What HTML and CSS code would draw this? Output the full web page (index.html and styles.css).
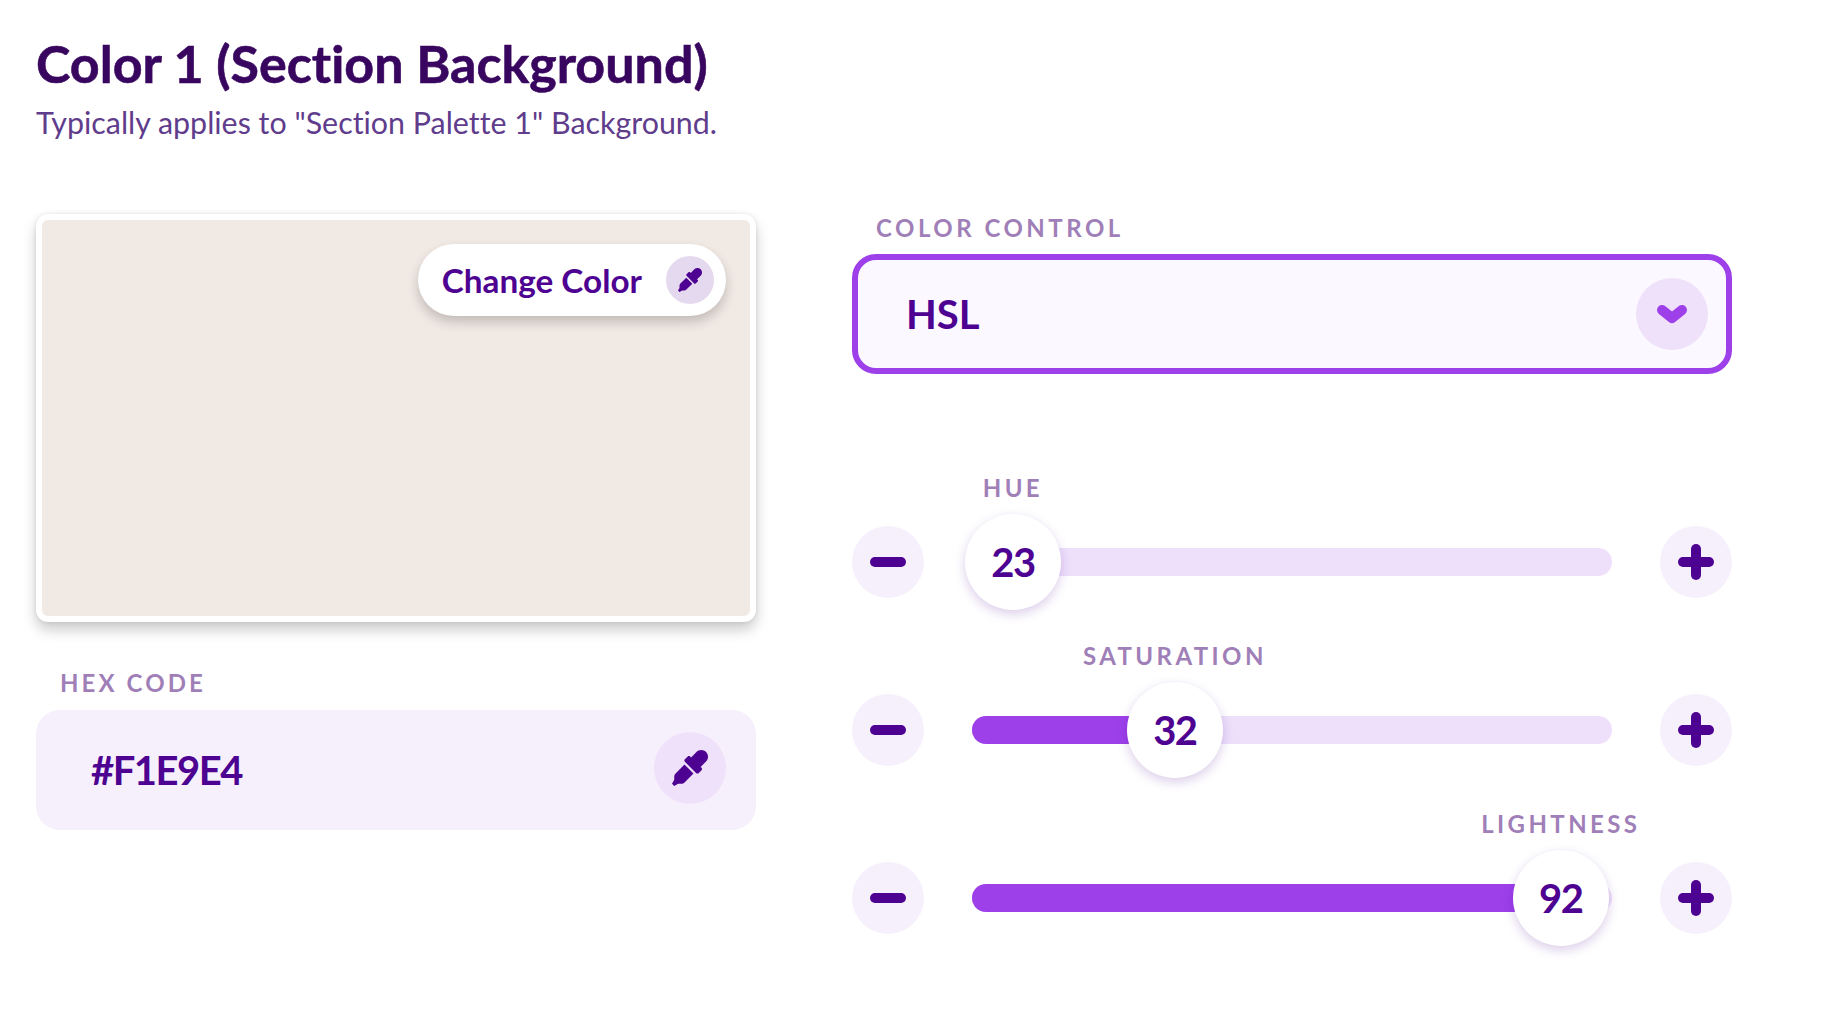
FILE: index.html
```html
<!DOCTYPE html>
<html lang="en">
<head>
  <meta charset="UTF-8">
  <title>Color 1 (Section Background)</title>
  <link rel="stylesheet" href="styles.css">
</head>
<body>

  <h1 class="title">Color 1 (Section Background)</h1>
  <p class="subtitle">Typically applies to "Section Palette 1" Background.</p>

  <div class="columns">

    <div class="leftCol">
      <div class="swatch">
        <div class="swatchFill">
          <div class="changeBtn">
            <span>Change Color</span>
            <span class="changeIcon">
              <svg width="24" height="24" viewBox="0 0 512 512"><path class="dropper" d="M50.75 333.25c-12 12-18.75 28.28-18.75 45.26V424L0 480l32 32 56-32h45.49c16.97 0 33.25-6.74 45.25-18.74l126.64-126.62-128-128L50.75 333.25zM483.88 28.12c-37.47-37.5-98.28-37.5-135.75 0l-77.09 77.09-13.1-13.1c-9.44-9.44-24.65-9.31-33.94 0l-40.97 40.97c-9.37 9.37-9.37 24.57 0 33.94l161.94 161.94c9.44 9.44 24.65 9.31 33.94 0L419.88 288c9.37-9.37 9.37-24.57 0-33.94l-13.1-13.1 77.09-77.09c37.5-37.48 37.5-98.28.01-135.75z"/></svg>
            </span>
          </div>
        </div>
      </div>

      <div class="fieldLabel hexLabel">HEX CODE</div>
      <div class="hexField">
        <span class="fieldValue hexValue">#F1E9E4</span>
        <span class="roundIcon hexIcon">
          <svg width="36" height="36" viewBox="0 0 512 512"><path class="dropper" d="M50.75 333.25c-12 12-18.75 28.28-18.75 45.26V424L0 480l32 32 56-32h45.49c16.97 0 33.25-6.74 45.25-18.74l126.64-126.62-128-128L50.75 333.25zM483.88 28.12c-37.47-37.5-98.28-37.5-135.75 0l-77.09 77.09-13.1-13.1c-9.44-9.44-24.65-9.31-33.94 0l-40.97 40.97c-9.37 9.37-9.37 24.57 0 33.94l161.94 161.94c9.44 9.44 24.65 9.31 33.94 0L419.88 288c9.37-9.37 9.37-24.57 0-33.94l-13.1-13.1 77.09-77.09c37.5-37.48 37.5-98.28.01-135.75z"/></svg>
        </span>
      </div>
    </div>

    <div class="rightCol">
      <div class="fieldLabel">COLOR CONTROL</div>
      <div class="selectBox">
        <span class="fieldValue">HSL</span>
        <span class="roundIcon">
          <svg width="32" height="22" viewBox="0 0 32 22"><polyline class="chevron" points="6,7 16,15 26,7"/></svg>
        </span>
      </div>

      <div class="sliders">
        <div class="sliderRow">
          <span class="stepBtn"><svg width="36" height="36" viewBox="0 0 36 36"><line class="stepIcon" x1="5" y1="18" x2="31" y2="18"/></svg></span>
          <div class="track">
            <div class="thumb" style="left: 6.39%">
              <span class="thumbLabel">HUE</span>
              23
            </div>
          </div>
          <span class="stepBtn"><svg width="36" height="36" viewBox="0 0 36 36"><line class="stepIcon" x1="5" y1="18" x2="31" y2="18"/><line class="stepIcon" x1="18" y1="5" x2="18" y2="31"/></svg></span>
        </div>

        <div class="sliderRow">
          <span class="stepBtn"><svg width="36" height="36" viewBox="0 0 36 36"><line class="stepIcon" x1="5" y1="18" x2="31" y2="18"/></svg></span>
          <div class="track">
            <div class="trackFill" style="width: 32%"></div>
            <div class="thumb" style="left: 31.7%">
              <span class="thumbLabel">SATURATION</span>
              32
            </div>
          </div>
          <span class="stepBtn"><svg width="36" height="36" viewBox="0 0 36 36"><line class="stepIcon" x1="5" y1="18" x2="31" y2="18"/><line class="stepIcon" x1="18" y1="5" x2="18" y2="31"/></svg></span>
        </div>

        <div class="sliderRow">
          <span class="stepBtn"><svg width="36" height="36" viewBox="0 0 36 36"><line class="stepIcon" x1="5" y1="18" x2="31" y2="18"/></svg></span>
          <div class="track">
            <div class="trackFill" style="width: 92%"></div>
            <div class="thumb" style="left: 92%">
              <span class="thumbLabel">LIGHTNESS</span>
              92
            </div>
          </div>
          <span class="stepBtn"><svg width="36" height="36" viewBox="0 0 36 36"><line class="stepIcon" x1="5" y1="18" x2="31" y2="18"/><line class="stepIcon" x1="18" y1="5" x2="18" y2="31"/></svg></span>
        </div>
      </div>
    </div>

  </div>

</body>
</html>
```

FILE: styles.css
```css
html, body {
  height: 100%;
}
body {
  margin: 0;
  padding: 34px 36px 0;
  box-sizing: border-box;
  background: #fff;
  font-family: Lato, "Open Sans", sans-serif;
  font-variant-ligatures: none;
  color: #4d0291;
}
.title {
  margin: 0;
  font-size: 52px;
  line-height: 58px;
  font-weight: 700;
  color: #38065f;
  -webkit-text-stroke: 0.6px #38065f;
}
.subtitle {
  margin: 10px 0 0;
  font-size: 30.4px;
  line-height: 40px;
  font-weight: 400;
  color: #603c8c;
}
.columns {
  display: grid;
  grid-template-columns: 720px 880px;
  gap: 96px;
  margin-top: 72px;
}
.swatch {
  height: 408px;
  box-sizing: border-box;
  padding: 6px;
  background: #fff;
  border-radius: 12px;
  box-shadow: 0 8px 14px rgba(0, 0, 0, 0.2), 0 0 4px rgba(0, 0, 0, 0.1);
}
.swatchFill {
  display: flex;
  justify-content: flex-end;
  align-items: flex-start;
  height: 100%;
  padding: 24px 24px 0 0;
  box-sizing: border-box;
  background: #f1e9e4;
  border-radius: 6px;
}
.changeBtn {
  display: flex;
  align-items: center;
  gap: 24px;
  height: 72px;
  padding: 0 12px 0 24px;
  background: #fff;
  border-radius: 36px;
  font-size: 33.3px;
  font-weight: 700;
  box-shadow: 0 6px 12px rgba(0, 0, 0, 0.2);
}
.changeIcon {
  display: flex;
  align-items: center;
  justify-content: center;
  width: 48px;
  height: 48px;
  border-radius: 50%;
  background: #e5d9ef;
}
.dropper {
  fill: #4d0291;
}
.fieldLabel {
  height: 24px;
  line-height: 24px;
  margin: 2px 0 14px;
  padding-left: 24px;
  font-size: 24px;
  font-weight: 700;
  letter-spacing: 3.5px;
  color: #a07fb8;
}
.hexLabel {
  margin: 49px 0 15px;
  letter-spacing: 3.1px;
}
.hexField {
  display: flex;
  align-items: center;
  justify-content: space-between;
  height: 120px;
  padding: 0 30px 0 55px;
  box-sizing: border-box;
  background: #f6f0fc;
  border-radius: 24px;
}
.fieldValue {
  font-size: 40px;
  font-weight: 700;
}
.hexValue {
  letter-spacing: -1.5px;
}
.roundIcon {
  display: flex;
  align-items: center;
  justify-content: center;
  width: 72px;
  height: 72px;
  border-radius: 50%;
  background: #f0e1fb;
}
.hexIcon {
  margin-bottom: 4px;
}
.selectBox {
  display: flex;
  align-items: center;
  justify-content: space-between;
  height: 120px;
  padding: 0 18px 0 48px;
  box-sizing: border-box;
  background: #fbf9ff;
  border: 6px solid #9d40ea;
  border-radius: 24px;
}
.chevron {
  fill: none;
  stroke: #9d40ea;
  stroke-width: 10;
  stroke-linecap: round;
  stroke-linejoin: round;
}
.sliders {
  display: flex;
  flex-direction: column;
  gap: 96px;
  margin-top: 152px;
}
.sliderRow {
  display: flex;
  align-items: center;
  gap: 48px;
}
.stepBtn {
  display: flex;
  align-items: center;
  justify-content: center;
  flex: none;
  width: 72px;
  height: 72px;
  border-radius: 50%;
  background: #f6f0fc;
}
.stepIcon {
  stroke: #4d0291;
  stroke-width: 10;
  stroke-linecap: round;
}
.track {
  position: relative;
  flex: 1;
  height: 28px;
  background: #eee0fb;
  border-radius: 14px;
}
.trackFill {
  height: 100%;
  background: #9d40ea;
  border-radius: 14px 0 0 14px;
}
.thumb {
  position: absolute;
  top: -34px;
  display: flex;
  align-items: center;
  justify-content: center;
  width: 96px;
  height: 96px;
  margin-left: -48px;
  background: #fff;
  border-radius: 50%;
  font-size: 40px;
  font-weight: 700;
  letter-spacing: -1.5px;
  box-shadow: 0 4px 12px rgba(77, 2, 145, 0.2);
}
.thumbLabel {
  position: absolute;
  bottom: 100%;
  left: 50%;
  margin-bottom: 14px;
  transform: translateX(-50%);
  font-size: 24px;
  line-height: 24px;
  letter-spacing: 3.4px;
  color: #a07fb8;
  white-space: nowrap;
}
```
